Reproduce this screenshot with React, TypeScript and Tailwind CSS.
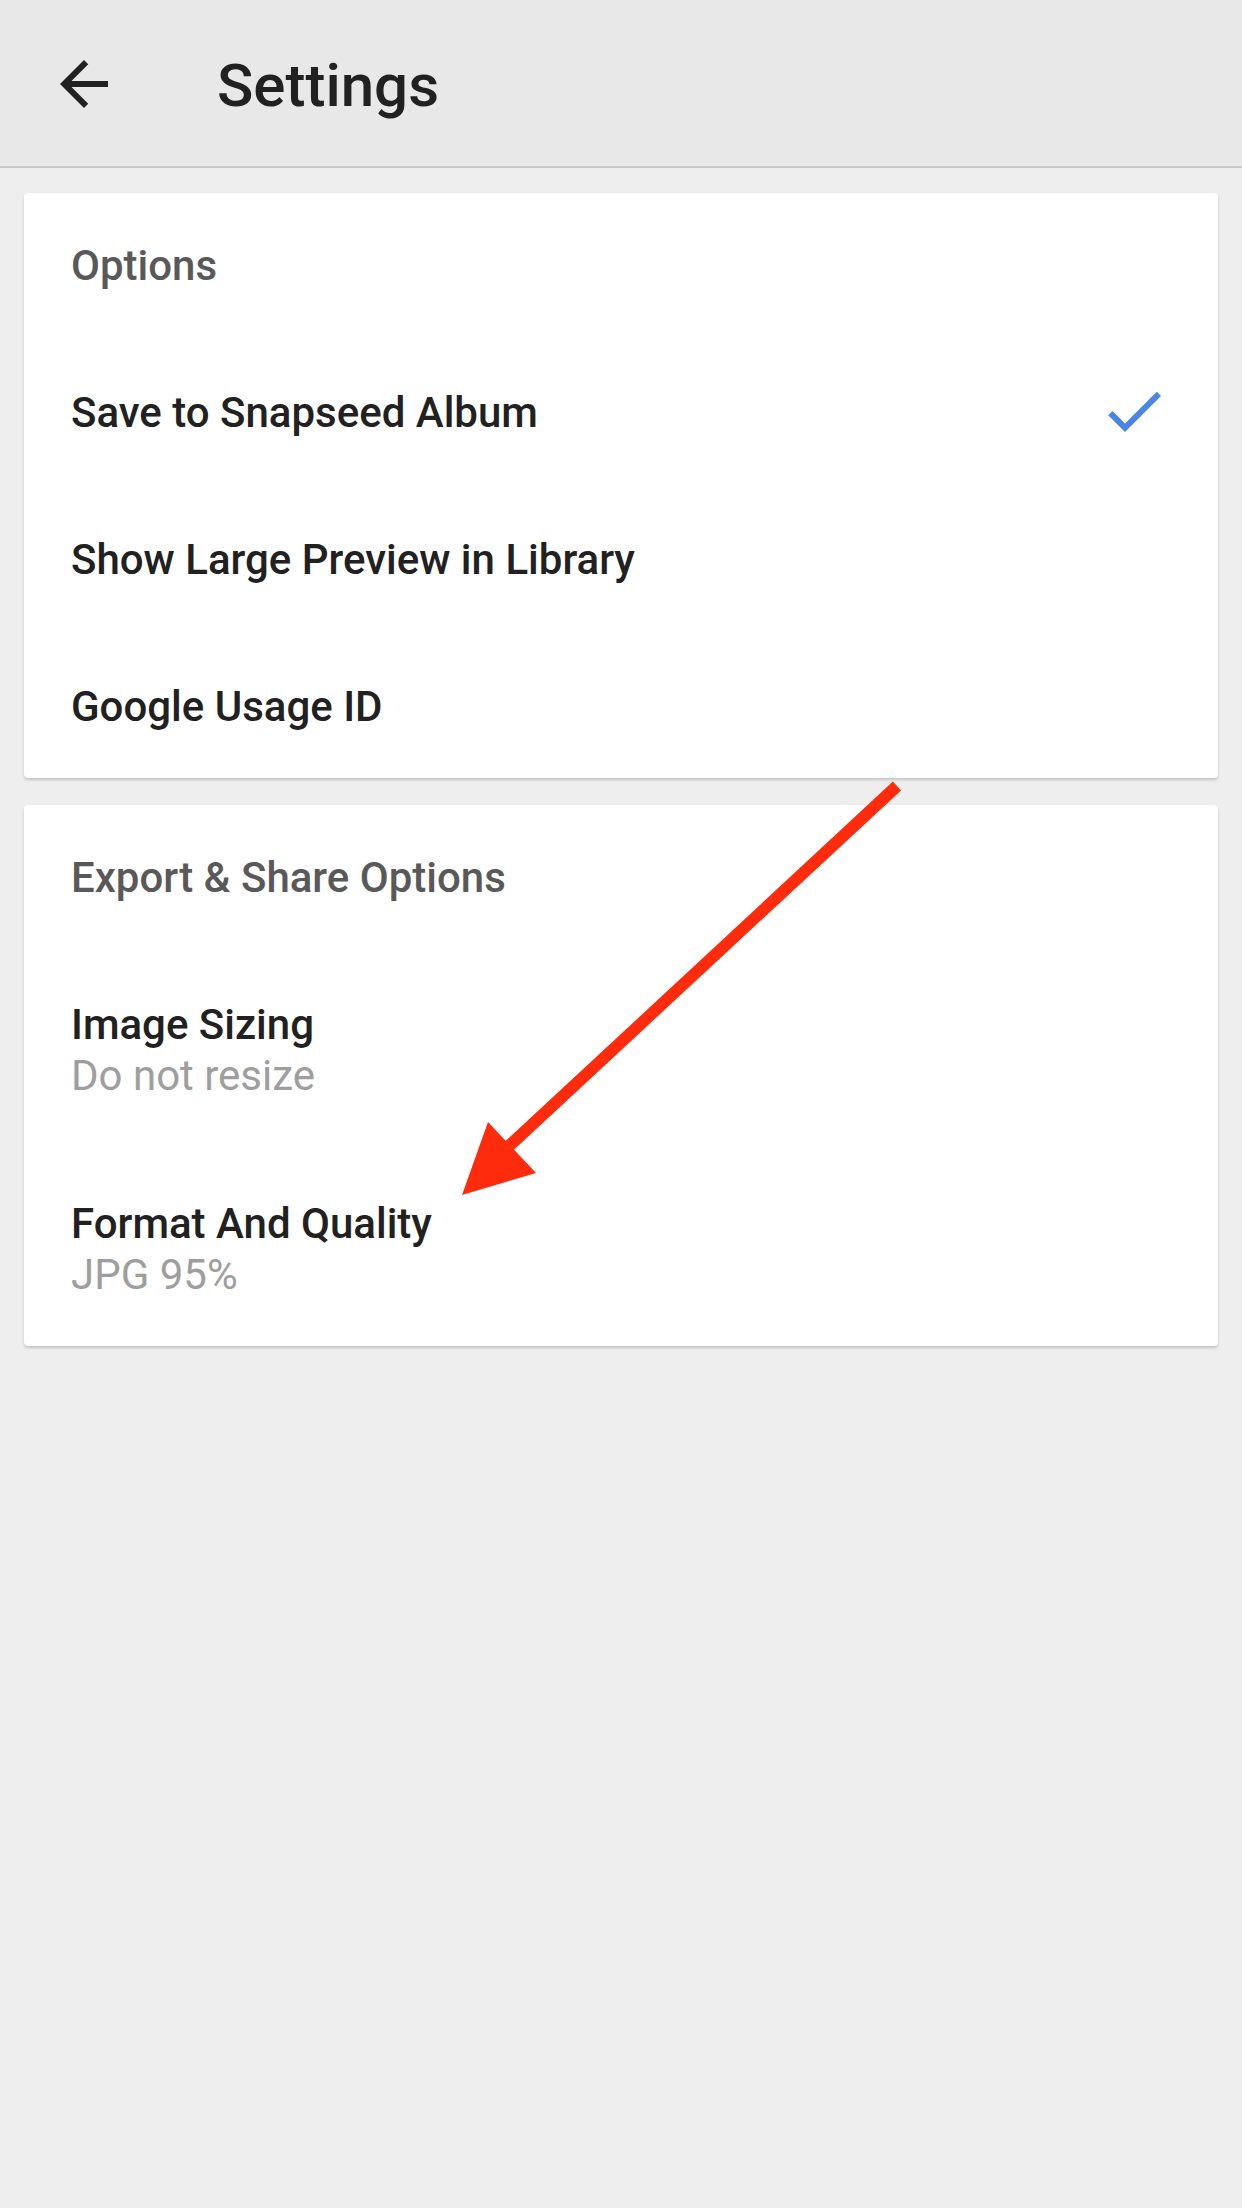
import React from "react";

function BackIcon() {
  return (
    <svg viewBox="0 0 24 24" width="72" height="72" className="block">
      <path fill="#212121" d="M20 11H7.83l5.59-5.59L12 4l-8 8 8 8 1.41-1.41L7.83 13H20v-2z" />
    </svg>
  );
}

function CheckIcon() {
  return (
    <svg viewBox="0 0 24 24" width="72" height="72" className="block">
      <path fill="#4a85e6" d="M9 16.17L4.83 12l-1.42 1.41L9 19 21 7l-1.41-1.41z" />
    </svg>
  );
}

function SimpleRow({ label, checked }: { label: string; checked?: boolean }) {
  return (
    <div className="flex h-[147px] items-center justify-between pl-[47px] pr-[48px]">
      <span className="pt-[4px] text-[42px] leading-[50px] font-medium text-[#212121]">{label}</span>
      {checked ? <CheckIcon /> : null}
    </div>
  );
}

function TwoLineRow({ title, sub, h }: { title: string; sub: string; h: string }) {
  return (
    <div className={`flex flex-col justify-center pl-[47px] pr-[48px] pt-[3px] ${h}`}>
      <span className="text-[42px] leading-[50px] font-medium text-[#212121]">{title}</span>
      <span className="mt-[1px] text-[42px] leading-[50px] font-normal text-[#9e9e9e]">{sub}</span>
    </div>
  );
}

function Category({ label }: { label: string }) {
  return (
    <div className="pl-[47px] pt-[48px] pb-[46px]">
      <span className="block text-[42px] leading-[50px] font-medium text-[#595959]">{label}</span>
    </div>
  );
}

export default function App() {
  return (
    <div className="relative min-h-[2208px] w-full overflow-hidden bg-[#eeeeee] font-[Roboto,'Noto_Sans',sans-serif]">
      <header className="flex h-[168px] items-center border-b-2 border-[#c8c8c8] bg-[#e8e8e8] pl-[48px] pt-[2px]">
        <BackIcon />
        <h1 className="ml-[97px] pt-[3px] text-[60px] leading-[60px] font-medium text-[#212121]">Settings</h1>
      </header>

      <div className="mx-[24px] mt-[25px] rounded-[4px] bg-white shadow-[0_2px_3px_rgba(0,0,0,0.18)]">
        <Category label="Options" />
        <SimpleRow label="Save to Snapseed Album" checked />
        <SimpleRow label="Show Large Preview in Library" />
        <SimpleRow label="Google Usage ID" />
      </div>

      <div className="mx-[24px] mt-[27px] rounded-[4px] bg-white shadow-[0_2px_3px_rgba(0,0,0,0.18)]">
        <Category label="Export & Share Options" />
        <TwoLineRow title="Image Sizing" sub="Do not resize" h="h-[200px]" />
        <TwoLineRow title="Format And Quality" sub="JPG 95%" h="h-[197px]" />
      </div>

      <svg
        className="pointer-events-none absolute left-0 top-0"
        width="1242"
        height="1400"
        viewBox="0 0 1242 1400"
      >
        <line x1="897" y1="786" x2="508" y2="1147" stroke="#fe2b0d" strokeWidth="12" strokeLinecap="butt" />
        <polygon points="462,1195 488,1122 536,1173" fill="#fe2b0d" />
      </svg>
    </div>
  );
}
